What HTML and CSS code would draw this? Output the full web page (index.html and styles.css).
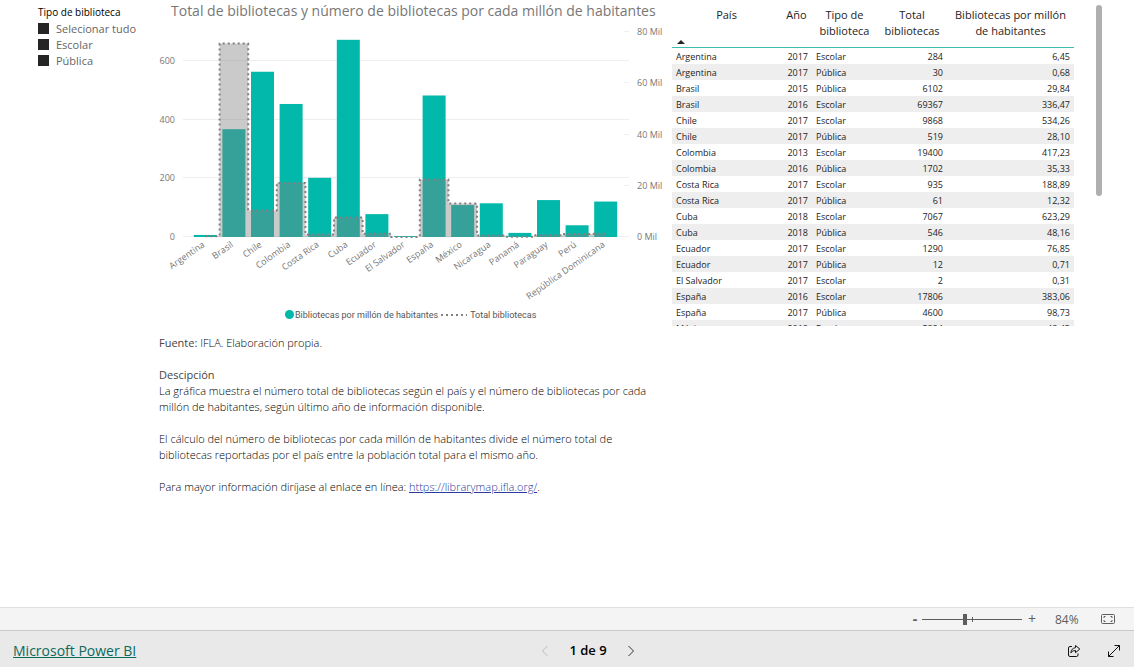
FILE: index.html
```
<!DOCTYPE html>
<html lang="es">
<head>
<meta charset="utf-8">
<title>Total de bibliotecas</title>
<link rel="stylesheet" href="styles.css">
</head>
<body>
<main class="report">
  <fieldset class="slicer">
    <legend class="slicer-title">Tipo de biblioteca</legend>
    <label class="slicer-item"><input class="slicer-box" type="checkbox" checked>Selecionar tudo</label>
    <label class="slicer-item"><input class="slicer-box" type="checkbox" checked>Escolar</label>
    <label class="slicer-item"><input class="slicer-box" type="checkbox" checked>Pública</label>
  </fieldset>

  <div class="center">
    <section class="chart">
      <h1 class="chart-title">Total de bibliotecas y número de bibliotecas por cada millón de habitantes</h1>
      <svg class="plot" viewBox="0 0 522 280" role="img" aria-label="Bibliotecas por país">
        <g class="grid" id="grid"></g>
        <g id="bars"></g>
        <path class="area" id="area"/>
        <path class="step" id="step"/>
        <g class="axis-text" id="labels"></g>
      </svg>
      <div class="legend">
        <span class="legend-dot"></span><span>Bibliotecas por millón de habitantes</span>
        <svg class="legend-line" viewBox="0 0 28 4"><path class="step" d="M1 2H27"/></svg><span>Total bibliotecas</span>
      </div>
    </section>
    <section class="notes">
      <p><span class="strong">Fuente:</span> IFLA. Elaboración propia.</p>
      <p><span class="strong">Descipción</span><br>La gráfica muestra el número total de bibliotecas según el país y el número de bibliotecas por cada millón de habitantes, según último año de información disponible.</p>
      <p>El cálculo del número de bibliotecas por cada millón de habitantes divide el número total de bibliotecas reportadas por el país entre la población total para el mismo año.</p>
      <p>Para mayor información diríjase al enlace en línea: <a class="note-link" href="https://librarymap.ifla.org/">https://librarymap.ifla.org/</a>.</p>
    </section>
  </div>

  <div class="table-wrap">
    <table class="data">
      <colgroup><col class="c-pais"><col class="c-ano"><col class="c-tipo"><col class="c-total"><col class="c-mill"></colgroup>
      <thead>
        <tr><th class="sorted">País</th><th>Año</th><th>Tipo de biblioteca</th><th>Total bibliotecas</th><th>Bibliotecas por millón<br>de habitantes</th></tr>
      </thead>
      <tbody>
        <tr><td>Argentina</td><td>2017</td><td>Escolar</td><td>284</td><td>6,45</td></tr>
        <tr><td>Argentina</td><td>2017</td><td>Pública</td><td>30</td><td>0,68</td></tr>
        <tr><td>Brasil</td><td>2015</td><td>Pública</td><td>6102</td><td>29,84</td></tr>
        <tr><td>Brasil</td><td>2016</td><td>Escolar</td><td>69367</td><td>336,47</td></tr>
        <tr><td>Chile</td><td>2017</td><td>Escolar</td><td>9868</td><td>534,26</td></tr>
        <tr><td>Chile</td><td>2017</td><td>Pública</td><td>519</td><td>28,10</td></tr>
        <tr><td>Colombia</td><td>2013</td><td>Escolar</td><td>19400</td><td>417,23</td></tr>
        <tr><td>Colombia</td><td>2016</td><td>Pública</td><td>1702</td><td>35,33</td></tr>
        <tr><td>Costa Rica</td><td>2017</td><td>Escolar</td><td>935</td><td>188,89</td></tr>
        <tr><td>Costa Rica</td><td>2017</td><td>Pública</td><td>61</td><td>12,32</td></tr>
        <tr><td>Cuba</td><td>2018</td><td>Escolar</td><td>7067</td><td>623,29</td></tr>
        <tr><td>Cuba</td><td>2018</td><td>Pública</td><td>546</td><td>48,16</td></tr>
        <tr><td>Ecuador</td><td>2017</td><td>Escolar</td><td>1290</td><td>76,85</td></tr>
        <tr><td>Ecuador</td><td>2017</td><td>Pública</td><td>12</td><td>0,71</td></tr>
        <tr><td>El Salvador</td><td>2017</td><td>Escolar</td><td>2</td><td>0,31</td></tr>
        <tr><td>España</td><td>2016</td><td>Escolar</td><td>17806</td><td>383,06</td></tr>
        <tr><td>España</td><td>2017</td><td>Pública</td><td>4600</td><td>98,73</td></tr>
        <tr><td>México</td><td>2018</td><td>Escolar</td><td>5894</td><td>48,43</td></tr>
      </tbody>
    </table>
  </div>
  <div class="scroll"><div class="scroll-thumb"></div></div>
</main>

<div class="zoombar">
  <button class="zoom-btn minus" aria-label="Alejar">-</button>
  <div class="slider-box">
    <input class="slider" type="range" min="10" max="190" value="86" aria-label="Zoom">
    <span class="slider-tick"></span>
  </div>
  <button class="zoom-btn" aria-label="Acercar">+</button>
  <span class="zoom-value">84%</span>
  <button class="icon-btn" aria-label="Ajustar a la página">
    <svg width="16" height="12" viewBox="0 0 16 12" class="icon-fit"><rect x="1.5" y="1.5" width="13" height="9" rx="1"/><path d="M4 5V3.5H5.500M10.500 3.500H12V5M12 7V8.500H10.500M5.500 8.500H4V7"/></svg>
  </button>
</div>

<footer class="footer">
  <a class="brand" href="#">Microsoft Power BI</a>
  <nav class="pager">
    <button class="icon-btn" disabled aria-label="Anterior"><svg width="12" height="12" viewBox="0 0 12 12" class="chev off"><path d="M8.500 1L3.500 6L8.500 11"/></svg></button>
    <span class="page-label">1 de 9</span>
    <button class="icon-btn" aria-label="Siguiente"><svg width="12" height="12" viewBox="0 0 12 12" class="chev"><path d="M3.500 1L8.500 6L3.500 11"/></svg></button>
  </nav>
  <div class="actions">
    <button class="icon-btn" aria-label="Compartir"><svg width="14" height="14" viewBox="0 0 14 14" class="icon-act"><path d="M5 2.500H3Q1.500 2.500 1.500 4V11Q1.500 12.500 3 12.500H9.500Q11 12.500 11 11V9.500"/><path d="M8.500 1.500L12.800 5L8.500 8.700V6.500Q5.500 6.300 3.800 8.800Q4.300 4.200 8.500 3.700Z"/></svg></button>
    <button class="icon-btn" aria-label="Pantalla completa"><svg width="14" height="14" viewBox="0 0 14 14" class="icon-act"><path d="M1.500 12.500L12.500 1.500M7.500 1.500H12.500V6.500M1.500 7.500V12.500H6.500"/></svg></button>
  </div>
</footer>
<script src="chart.js"></script>
</body>
</html>
```
FILE: styles.css
```
* { box-sizing: border-box; }
body {
  margin: 0;
  min-height: 100vh;
  display: flex;
  flex-direction: column;
  background: #fff;
  color: #252423;
  font-family: "Open Sans", "Noto Sans", sans-serif;
  font-size: 11px;
}
button { border: 0; padding: 0; background: none; font: inherit; color: inherit; }

.report {
  flex: 1;
  display: grid;
  grid-template-columns: 150px minmax(0, 1fr) 402px 60px;
  align-items: start;
}

.slicer { margin: 0; border: 0; padding: 4px 0 0 38px; min-width: 0; white-space: nowrap; }
.slicer-title { float: left; width: 100%; padding: 0; font-size: 10px; line-height: 16px; color: #000; }
.slicer-item { clear: both; display: flex; align-items: center; gap: 7px; height: 16px; font-size: 11px; color: #666; }
.slicer-box { appearance: none; width: 11px; height: 11px; margin: 0; background: #252525; }

.chart-title { margin: 0; padding-left: 21px; font-size: 14px; font-weight: 400; line-height: 22px; color: #777; white-space: nowrap; }
.plot { display: block; width: 100%; }
.grid line { stroke: #eee; }
.bar { fill: #01b8aa; }
.area { fill: #808080; fill-opacity: .42; }
.step { fill: none; stroke: #808080; stroke-width: 2; stroke-dasharray: 2 3; }
.area, .step { stroke-linejoin: round; }
.axis-text { font-size: 9px; fill: #777; }
.legend { display: flex; align-items: center; padding-left: 135px; height: 25px; font-family: Roboto, "Open Sans", sans-serif; font-size: 9px; color: #555; white-space: nowrap; }
.legend-dot { width: 9px; height: 9px; border-radius: 50%; background: #01b8aa; margin-right: 1px; }
.legend-line { width: 28px; height: 4px; margin: 0 2px; }

.notes { padding: 8px 10px 0 9px; font-size: 11px; font-weight: 300; line-height: 16px; color: #000; }
.notes p { margin: 0 0 16px; }
.strong { font-weight: 400; color: #444; }
.note-link { color: #2b3a9c; }

.table-wrap { height: 326px; overflow: hidden; }
.data { width: 100%; table-layout: fixed; border-collapse: separate; border-spacing: 0; font-size: 9px; }
.c-pais { width: 109px; }
.c-ano { width: 31px; }
.c-tipo { width: 65px; }
.c-total { width: 70px; }
.data th { height: 48px; padding: 7px 0 0; vertical-align: top; border-bottom: 1px solid #3dbdb3; font-size: 11px; font-weight: 400; line-height: 16px; }
.sorted { position: relative; }
.sorted::after { content: ""; position: absolute; left: 5px; bottom: 3px; border: 4px solid transparent; border-top: 0; border-bottom-color: #252423; }
.data td { height: 16px; padding: 1px 4px 0; line-height: 15px; white-space: nowrap; }
.data td:nth-child(2), .data td:nth-child(4), .data td:nth-child(5) { text-align: right; }
.data tr:nth-child(even) td { background: #eee; }

.scroll { padding: 5px 0 0 22px; }
.scroll-thumb { width: 6px; height: 191px; border-radius: 3px; background: #b0afae; }

.zoombar { display: flex; align-items: center; justify-content: flex-end; height: 24px; padding-right: 18px; background: #f4f4f4; border-top: 1px solid #e0e0e0; border-bottom: 1px solid #c8c8c8; color: #605e5c; }
.zoom-btn { width: 8px; font-size: 14px; line-height: 20px; }
.minus { font-weight: 700; }
.slider-box { position: relative; display: flex; margin: 0 6px 0 3px; }
.slider { appearance: none; width: 100px; height: 12px; margin: 0; background: linear-gradient(#605e5c, #605e5c) center / 100% 1px no-repeat; }
.slider::-webkit-slider-thumb { appearance: none; width: 4px; height: 11px; background: #605e5c; }
.slider-tick { position: absolute; left: 50px; top: 4px; width: 1px; height: 5px; background: #605e5c; }
.zoom-value { width: 43px; padding-left: 19px; font-size: 12px; }
.zoombar .icon-btn { margin-left: 21px; }
.icon-btn { display: flex; }
.icon-fit { fill: none; stroke: #605e5c; }

.footer { display: grid; grid-template-columns: 1fr auto 1fr; align-items: center; height: 36px; padding: 3px 13px 0; background: #e9e9e9; }
.brand { font-size: 14px; line-height: 20px; color: #0b6a5d; }
.pager { display: flex; align-items: center; gap: 18px; padding-left: 42px; }
.page-label { font-size: 13px; font-weight: 600; line-height: 16px; padding-bottom: 2px; color: #000; }
.chev { fill: none; stroke: #333; }
.off { stroke: #bbb; }
.actions { display: flex; justify-content: flex-end; gap: 26px; }
.icon-act { fill: none; stroke: #111; }
```
FILE: chart.js
```
const data = [
  ["Argentina", 7, 314], ["Brasil", 368, 75469], ["Chile", 564, 10387],
  ["Colombia", 454, 21102], ["Costa Rica", 202, 996], ["Cuba", 673, 7613],
  ["Ecuador", 78, 1302], ["El Salvador", 3, 2], ["España", 483, 22406],
  ["México", 109, 13100], ["Nicaragua", 115, 600], ["Panamá", 14, 100],
  ["Paraguay", 126, 700], ["Perú", 40, 1200], ["República Dominicana", 121, 1300]
];
const base = 215, left = 41, step = 28.6, barWidth = 23;
const y1 = v => base - v * 58.6 / 200;
const y2 = v => base - v * 51.25 / 20000;
const add = (id, tag, attrs, text) => {
  const el = document.createElementNS("http://www.w3.org/2000/svg", tag);
  for (const k in attrs) el.setAttribute(k, attrs[k]);
  if (text) el.textContent = text;
  document.getElementById(id).append(el);
};

for (const v of [0, 200, 400, 600]) {
  const y = Math.round(y1(v)) - 0.5;
  add("grid", "line", { x1: 33, x2: 479, y1: y, y2: y });
  add("labels", "text", { x: 25, y: y + 3, "text-anchor": "end" }, String(v));
}
for (const v of [0, 20, 40, 60, 80]) {
  const y = Math.round(y2(v * 1000)) - 0.5;
  add("grid", "line", { x1: 474, x2: 479, y1: y, y2: y });
  add("labels", "text", { x: 487, y: y + 3 }, v + " Mil");
}

let path = "";
data.forEach(([name, rate, total], i) => {
  const start = left + i * step, center = start + step / 2;
  add("bars", "rect", { class: "bar", x: center - barWidth / 2, y: y1(rate), width: barWidth, height: base - y1(rate) });
  add("labels", "text", { "text-anchor": "end", transform: `translate(${center} 224) rotate(-35)` }, name);
  const from = i ? start : center;
  const to = i < data.length - 1 ? start + step : center;
  path += `${i ? "L" : "M"}${from} ${y2(total)}H${to}`;
});
const first = left + step / 2, last = left + (data.length - 0.5) * step;
document.getElementById("step").setAttribute("d", path);
document.getElementById("area").setAttribute("d", `${path}L${last} ${base}H${first}Z`);
```
